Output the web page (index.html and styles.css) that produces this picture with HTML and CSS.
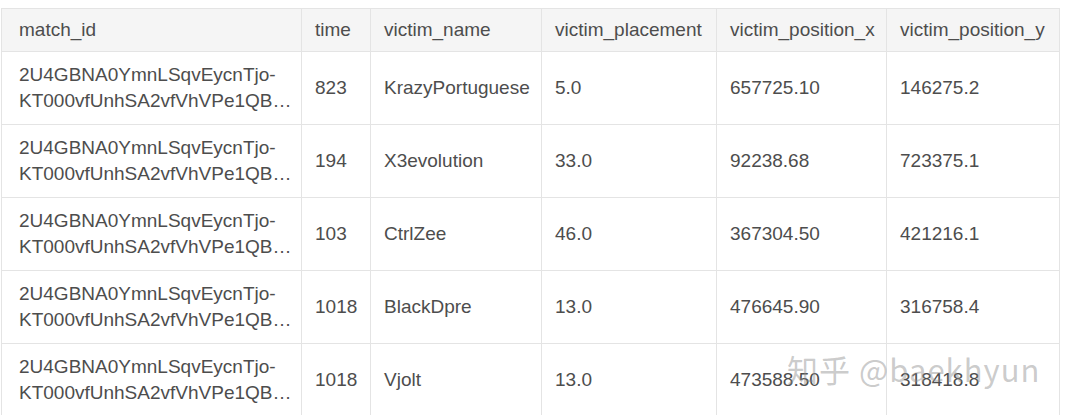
FILE: index.html
```html
<!DOCTYPE html>
<html>
<head>
<meta charset="utf-8">
<link rel="stylesheet" href="styles.css">
</head>
<body>
<div class="wrap">
<table class="grid">
  <colgroup>
    <col class="c1"><col class="c2"><col class="c3"><col class="c4"><col class="c5"><col class="c6">
  </colgroup>
  <thead>
    <tr><th class="first">match_id</th><th>time</th><th>victim_name</th><th>victim_placement</th><th>victim_position_x</th><th>victim_position_y</th></tr>
  </thead>
  <tbody>
    <tr><td class="first"><span class="ln">2U4GBNA0YmnLSqvEycnTjo-</span><span class="ln">KT000vfUnhSA2vfVhVPe1QB…</span></td><td>823</td><td>KrazyPortuguese</td><td>5.0</td><td>657725.10</td><td>146275.2</td></tr>
    <tr><td class="first"><span class="ln">2U4GBNA0YmnLSqvEycnTjo-</span><span class="ln">KT000vfUnhSA2vfVhVPe1QB…</span></td><td>194</td><td>X3evolution</td><td>33.0</td><td>92238.68</td><td>723375.1</td></tr>
    <tr><td class="first"><span class="ln">2U4GBNA0YmnLSqvEycnTjo-</span><span class="ln">KT000vfUnhSA2vfVhVPe1QB…</span></td><td>103</td><td>CtrlZee</td><td>46.0</td><td>367304.50</td><td>421216.1</td></tr>
    <tr><td class="first"><span class="ln">2U4GBNA0YmnLSqvEycnTjo-</span><span class="ln">KT000vfUnhSA2vfVhVPe1QB…</span></td><td>1018</td><td>BlackDpre</td><td>13.0</td><td>476645.90</td><td>316758.4</td></tr>
    <tr><td class="first"><span class="ln">2U4GBNA0YmnLSqvEycnTjo-</span><span class="ln">KT000vfUnhSA2vfVhVPe1QB…</span></td><td>1018</td><td>Vjolt</td><td>13.0</td><td>473588.50</td><td>318418.8</td></tr>
  </tbody>
</table>
<div class="watermark">知乎 @baekhyun</div>
</div>
</body>
</html>
```
FILE: styles.css
```css
html, body {
  margin: 0;
  padding: 0;
  background: #fff;
}
.wrap {
  position: relative;
  height: 415px;
  overflow: hidden;
}
.grid {
  margin: 8px 0 0 1px;
  width: 1058px;
  border-collapse: collapse;
  table-layout: fixed;
  font-family: "Liberation Sans", Arial, sans-serif;
  font-size: 19px;
  color: #4d4d4d;
}
.c1 { width: 300px; }
.c2 { width: 69px; }
.c3 { width: 171px; }
.c4 { width: 175px; }
.c5 { width: 170px; }
.c6 { width: 173px; }
th, td {
  border: 1px solid #e4e4e4;
  text-align: left;
  font-weight: normal;
  padding: 0 0 0 13px;
  line-height: 26px;
  white-space: nowrap;
  overflow: hidden;
  vertical-align: middle;
}
th {
  background: #f5f5f5;
  height: 42px;
}
td {
  height: 72px;
}
.first {
  padding-left: 17px;
}
.ln {
  display: block;
}
.watermark {
  position: absolute;
  left: 787px;
  top: 346px;
  font-family: "Noto Sans CJK SC", "Liberation Sans", sans-serif;
  font-size: 31px;
  letter-spacing: 1px;
  color: rgba(140, 140, 140, 0.45);
  white-space: nowrap;
}
```
